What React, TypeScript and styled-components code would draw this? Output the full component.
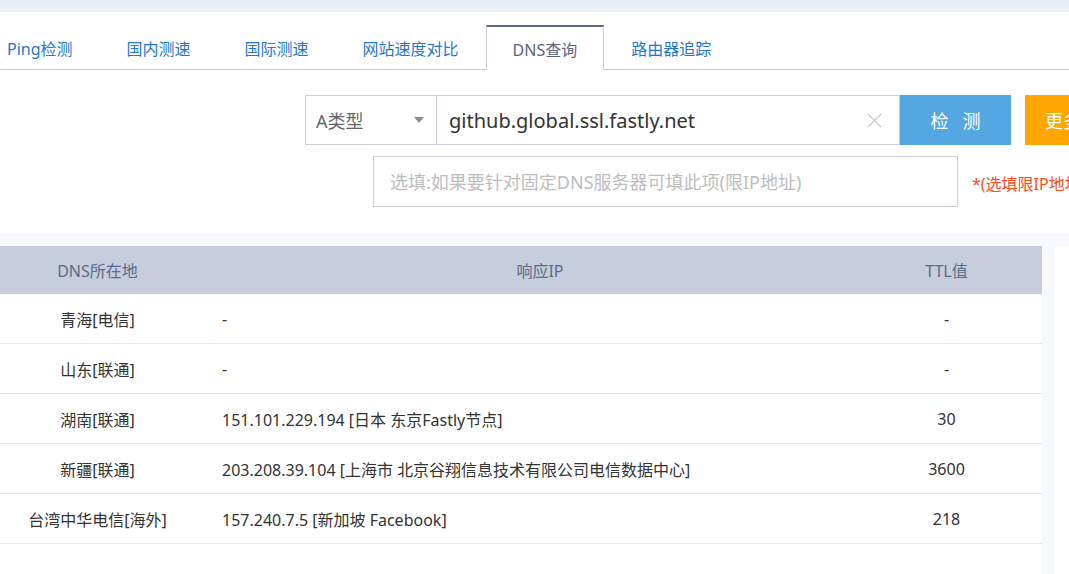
import React from "react";
import styled, { createGlobalStyle } from "styled-components";

const GlobalStyle = createGlobalStyle`
  html, body {
    margin: 0;
    padding: 0;
    background: #ffffff;
    overflow: hidden;
  }
  body {
    font-family: "Noto Sans", "Noto Sans CJK SC", sans-serif;
    color: #333;
  }
  * { box-sizing: border-box; }
`;

interface Row {
  place: string;
  ip: string;
  ttl: string;
}

const tabs = ["Ping检测", "国内测速", "国际测速", "网站速度对比", "DNS查询", "路由器追踪"];
const activeTab = "DNS查询";

const rows: Row[] = [
  { place: "青海[电信]", ip: "-", ttl: "-" },
  { place: "山东[联通]", ip: "-", ttl: "-" },
  { place: "湖南[联通]", ip: "151.101.229.194 [日本 东京Fastly节点]", ttl: "30" },
  { place: "新疆[联通]", ip: "203.208.39.104 [上海市 北京谷翔信息技术有限公司电信数据中心]", ttl: "3600" },
  { place: "台湾中华电信[海外]", ip: "157.240.7.5 [新加坡 Facebook]", ttl: "218" },
];

const App = () => {
  return (
    <Page>
      <GlobalStyle />
      <TopBand />
      <Main>
        <TabBar>
          {tabs.map((t) => (
            <Tab key={t} active={t === activeTab}>{t}</Tab>
          ))}
        </TabBar>

        <Form>
          <QueryRow>
            <Select>
              <span>A类型</span>
              <Caret />
            </Select>
            <DomainBox>
              <DomainText>github.global.ssl.fastly.net</DomainText>
              <Clear viewBox="0 0 16 16">
                <path d="M1 1 L15 15 M15 1 L1 15" stroke="#c8c8c8" strokeWidth="1.4" fill="none" />
              </Clear>
            </DomainBox>
            <Button>检&nbsp;&nbsp;&nbsp;测</Button>
            <MoreButton>更多...</MoreButton>
          </QueryRow>
          <ServerRow>
            <ServerInput placeholder="选填:如果要针对固定DNS服务器可填此项(限IP地址)" />
            <Hint>*(选填限IP地址)</Hint>
          </ServerRow>
        </Form>
      </Main>

      <ResultArea>
        <Table>
          <HeadRow>
            <HeadCell>DNS所在地</HeadCell>
            <HeadCell shift={34}>响应IP</HeadCell>
            <HeadCell>TTL值</HeadCell>
          </HeadRow>
          {rows.map((r) => (
            <BodyRow key={r.place}>
              <Cell>{r.place}</Cell>
              <IpCell>{r.ip}</IpCell>
              <Cell>{r.ttl}</Cell>
            </BodyRow>
          ))}
        </Table>
        <SidePanel />
      </ResultArea>
    </Page>
  );
};

const Page = styled.div`
  width: 1069px;
  height: 574px;
  overflow: hidden;
  display: flex;
  flex-direction: column;
`;

const TopBand = styled.div`
  height: 12px;
  flex-shrink: 0;
  background: linear-gradient(#e4ebf5, #eef2f8);
`;

const Main = styled.div`
  background: #fff;
  padding-top: 13px;
  padding-bottom: 26px;
  flex-shrink: 0;
`;

const TabBar = styled.div`
  display: flex;
  align-items: flex-end;
  margin-left: -20px;
  border-bottom: 1px solid #c9d0dc;
`;

const Tab = styled.div<{ active?: boolean }>`
  padding: 0 26px;
  display: flex;
  align-items: center;
  flex-shrink: 0;
  font-size: 16px;
  color: ${(p) => (p.active ? "#5a6680" : "#1f78c8")};
  background: #fff;
  border-top: 2px solid ${(p) => (p.active ? "#5b6a85" : "transparent")};
  border-left: 1px solid ${(p) => (p.active ? "#c9d0dc" : "transparent")};
  border-right: 1px solid ${(p) => (p.active ? "#c9d0dc" : "transparent")};
  margin-bottom: ${(p) => (p.active ? "-1px" : "0")};
  height: ${(p) => (p.active ? "45px" : "44px")};
`;

const Form = styled.div`
  display: flex;
  flex-direction: column;
  gap: 11px;
  margin-top: 25px;
`;

const QueryRow = styled.div`
  display: flex;
  padding-left: 305px;
  height: 50px;
  & > * {
    flex-shrink: 0;
  }
`;

const Select = styled.div`
  width: 132px;
  height: 50px;
  border: 1px solid #c9d0dc;
  display: flex;
  align-items: center;
  justify-content: space-between;
  padding: 0 12px 0 10px;
  font-size: 18px;
  color: #666;
`;

const Caret = styled.span`
  width: 0;
  height: 0;
  border-left: 5px solid transparent;
  border-right: 5px solid transparent;
  border-top: 6px solid #8a8a8a;
`;

const DomainBox = styled.div`
  width: 463px;
  height: 50px;
  border: 1px solid #c9d0dc;
  border-left: none;
  display: flex;
  align-items: center;
  justify-content: space-between;
  padding: 0 17px 0 12px;
`;

const DomainText = styled.span`
  font-size: 20px;
  color: #333;
`;

const Clear = styled.svg`
  width: 15px;
  height: 15px;
`;

const Button = styled.div`
  width: 111px;
  height: 50px;
  background: #55a7e2;
  color: #fff;
  font-size: 18px;
  display: flex;
  align-items: center;
  justify-content: center;
`;

const MoreButton = styled.div`
  margin-left: 14px;
  width: 111px;
  height: 50px;
  background: #ffa600;
  color: #fff;
  font-size: 18px;
  display: flex;
  align-items: center;
  padding-left: 20px;
`;

const ServerRow = styled.div`
  display: flex;
  align-items: center;
  padding-left: 373px;
  gap: 14px;
  white-space: nowrap;
`;

const ServerInput = styled.input`
  width: 585px;
  height: 51px;
  flex-shrink: 0;
  border: 1px solid #c9d0dc;
  outline: none;
  padding: 0 16px;
  font-family: inherit;
  font-size: 18px;
  color: #333;
  &::placeholder {
    color: #bdbdbd;
  }
`;

const Hint = styled.span`
  font-size: 16px;
  color: #ff4a1a;
  padding-top: 2px;
`;

const ResultArea = styled.div`
  flex: 1;
  display: flex;
  gap: 13px;
  background: #f7f9fc;
  padding-top: 13px;
`;

const Table = styled.div`
  width: 1042px;
  flex-shrink: 0;
  background: #fff;
`;

const HeadRow = styled.div`
  display: grid;
  grid-template-columns: 195px 656px 1fr;
  height: 48px;
  background: #c6cedd;
  color: #5b6a87;
  font-size: 16px;
`;

const HeadCell = styled.div<{ shift?: number }>`
  display: flex;
  align-items: center;
  justify-content: center;
  padding-left: ${(p) => p.shift ?? 0}px;
`;

const BodyRow = styled.div`
  display: grid;
  grid-template-columns: 195px 656px 1fr;
  height: 50px;
  border-bottom: 1px solid #e6e6e6;
  font-size: 16px;
  color: #333;
`;

const Cell = styled.div`
  display: flex;
  align-items: center;
  justify-content: center;
  white-space: nowrap;
`;

const IpCell = styled.div`
  display: flex;
  align-items: center;
  padding-left: 27px;
  white-space: nowrap;
`;

const SidePanel = styled.div`
  flex: 1;
  background: #fff;
`;

export default App;
